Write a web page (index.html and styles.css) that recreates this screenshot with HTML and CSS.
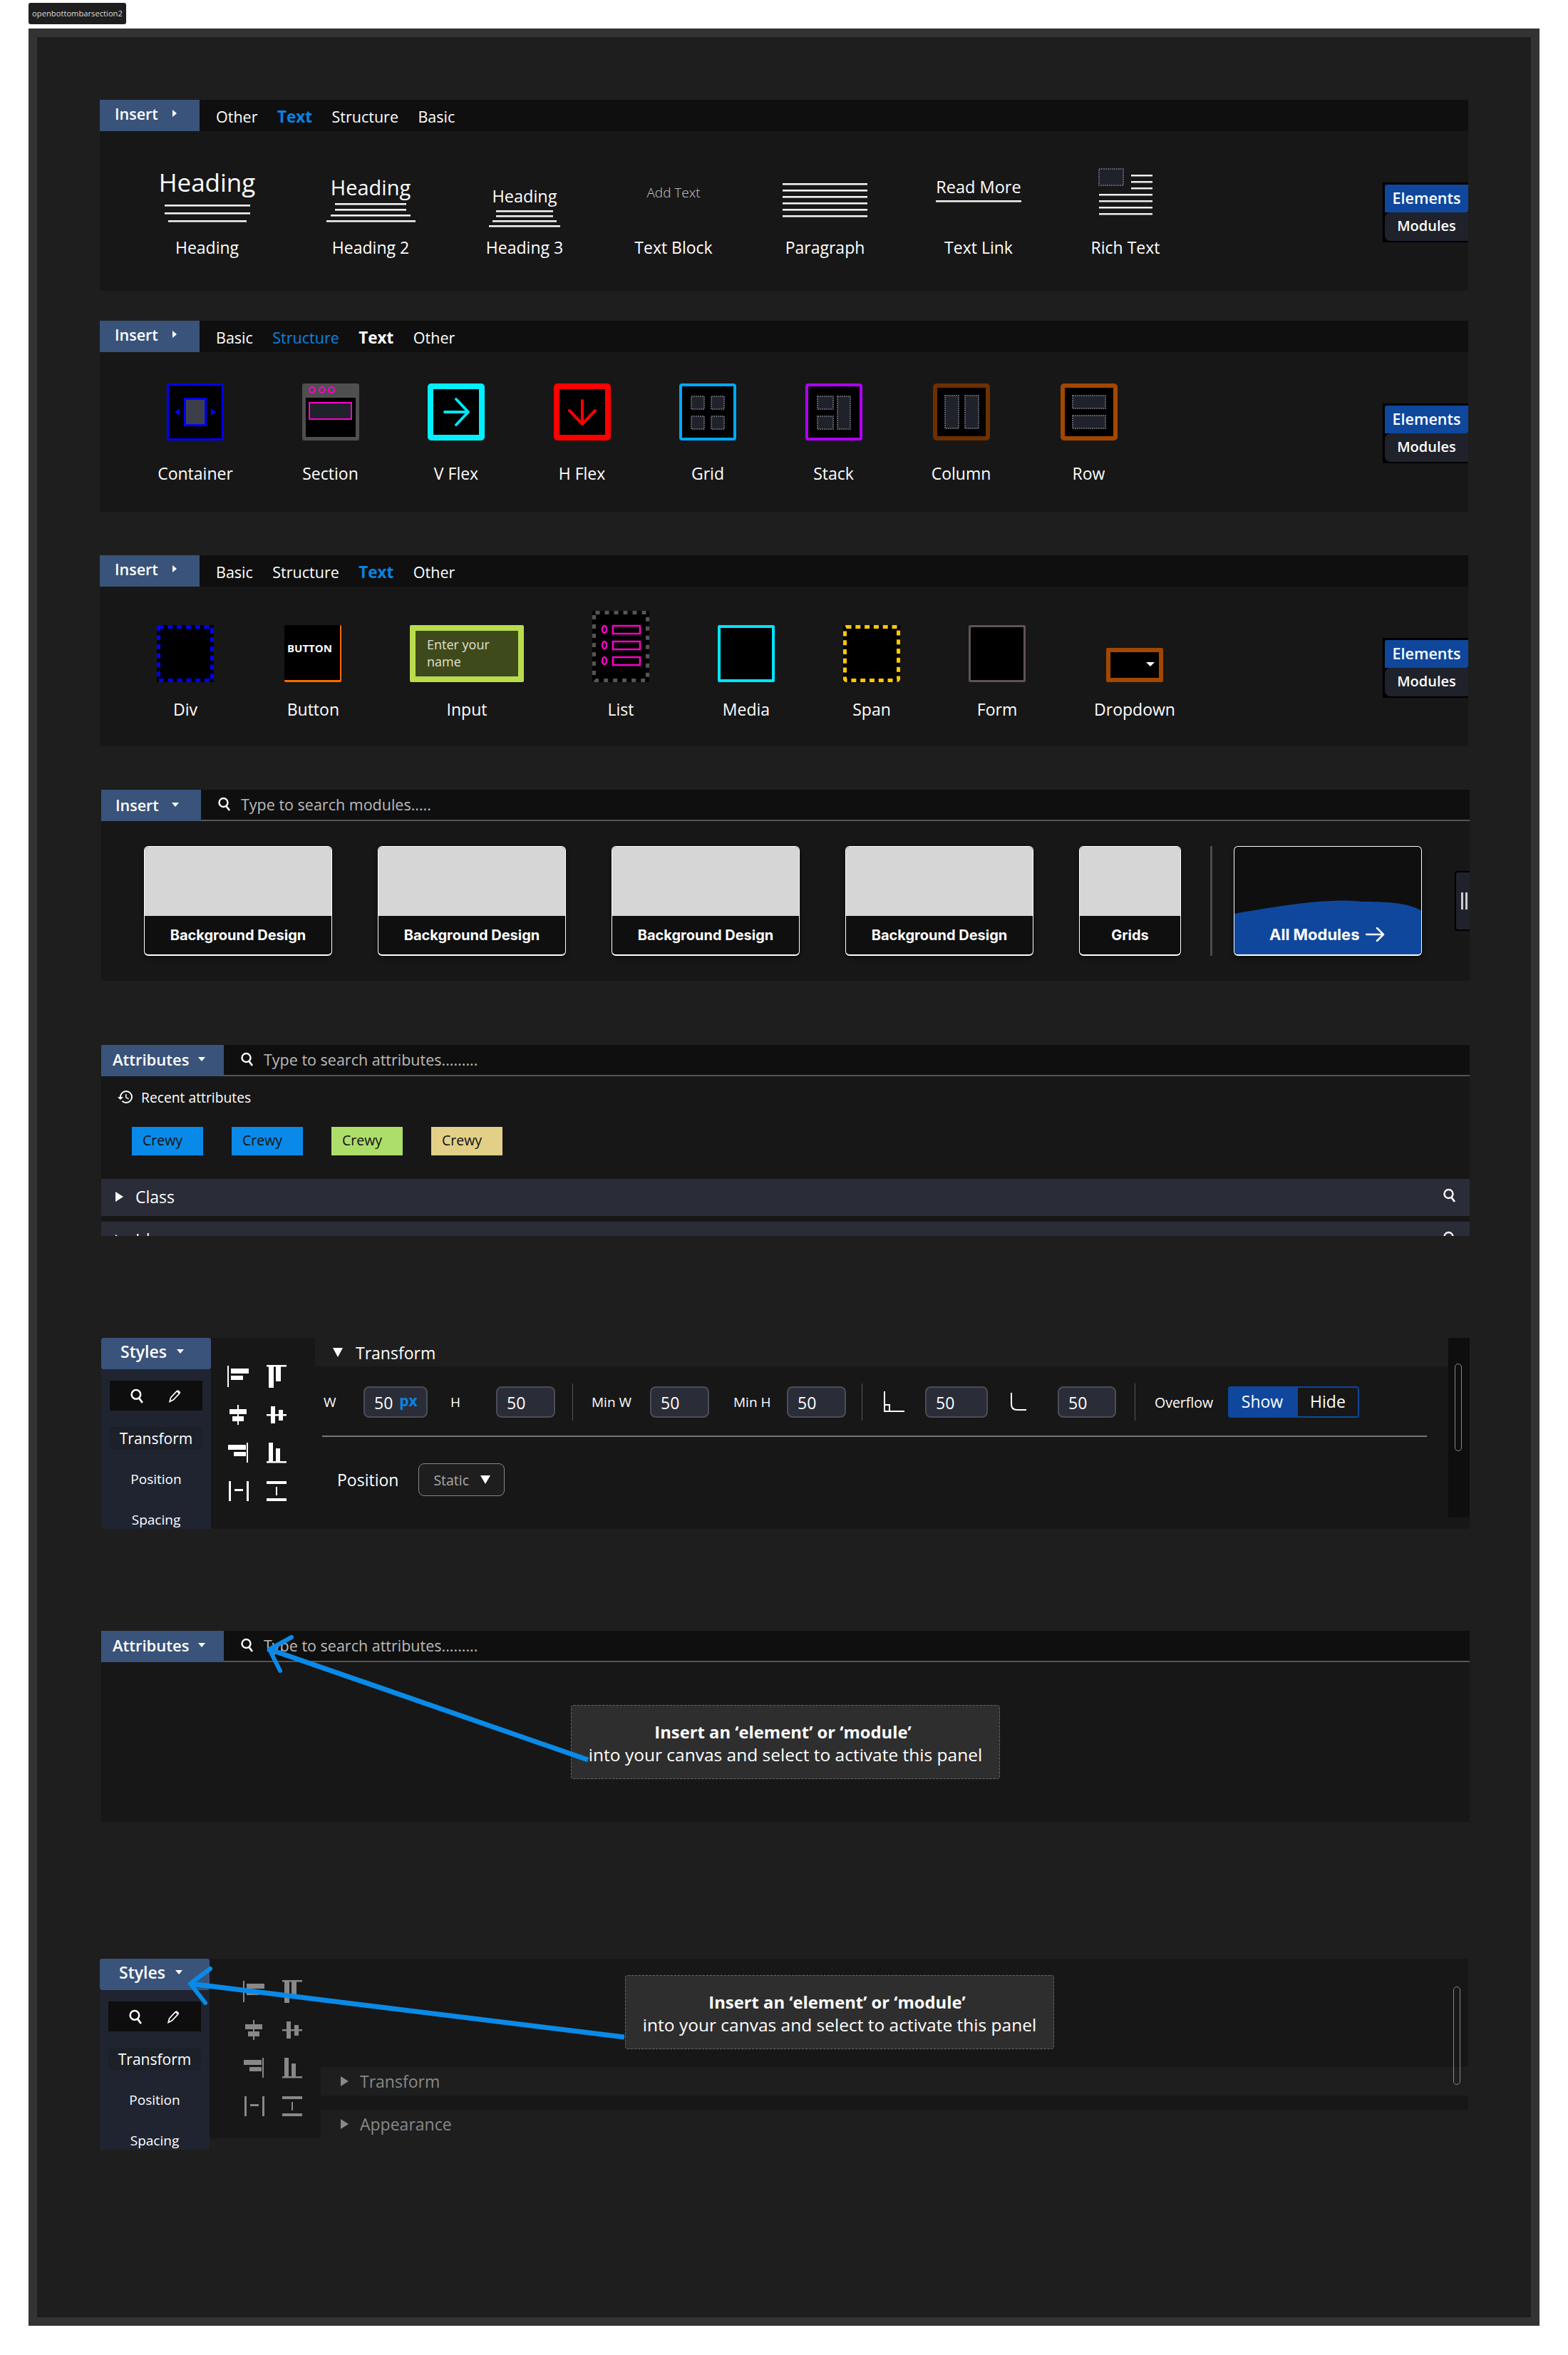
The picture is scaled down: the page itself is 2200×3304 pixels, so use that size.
FILE: index.html
```html
<!DOCTYPE html>
<html lang="en">
<head>
<meta charset="utf-8">
<title>openbottombarsection2</title>
<link rel="stylesheet" href="styles.css">
</head>
<body>
<svg class="sprite" width="0" height="0" aria-hidden="true">
  <symbol id="i-search" viewBox="0 0 20 20"><circle cx="8.5" cy="8" r="6" fill="none" stroke="currentColor" stroke-width="2.4"/><path d="M12.5 13 L17 19" stroke="currentColor" stroke-width="2.6"/></symbol>
  <symbol id="i-pencil" viewBox="0 0 18 18"><path d="M2 16.5 L3.5 11 L11.5 2.5 L15 5.5 L7 14 Z" fill="none" stroke="currentColor" stroke-width="1.6"/><path d="M11.5 2.5 L13 1 L16.5 4 L15 5.5 Z" fill="currentColor"/></symbol>
  <symbol id="a-left" viewBox="0 0 32 32"><path d="M1 1h2v30H1zM6 5h25v7H6zM6 15h17v6H6z" fill="currentColor"/></symbol>
  <symbol id="a-top" viewBox="0 0 32 32"><path d="M2 0h28v2.500H2zM5 2h7v30H5zM15 2h7v21h-7z" fill="currentColor"/></symbol>
  <symbol id="a-hcenter" viewBox="0 0 32 32"><path d="M15 2h2v28h-2zM4 8h24v7H4zM8 18h16v7H8z" fill="currentColor"/></symbol>
  <symbol id="a-vcenter" viewBox="0 0 32 32"><path d="M2 15h28v2.500H2zM8 4h6v24H8zM19 9h6v15h-6z" fill="currentColor"/></symbol>
  <symbol id="a-right" viewBox="0 0 32 32"><path d="M28 2h2v28h-2zM2 5h25v7H2zM10 15h17v6H10z" fill="currentColor"/></symbol>
  <symbol id="a-bottom" viewBox="0 0 32 32"><path d="M2 28h28v2.500H2zM5 2h6v26H5zM15 10h6v18h-6z" fill="currentColor"/></symbol>
  <symbol id="a-dish" viewBox="0 0 32 32"><path d="M3 2h3v28H3zM28 2h3v28h-3zM11 13h12v3H11z" fill="currentColor"/></symbol>
  <symbol id="a-disv" viewBox="0 0 32 32"><path d="M2 2h28v4H2zM2 26h28v4H2zM15 10h2v12h-2z" fill="currentColor"/></symbol>
</svg>

<div class="tag">openbottombarsection2</div>

<main class="frame">

  <section class="panel p1">
    <div class="bar">
      <div class="insert"><span>Insert</span><i class="tri-r"></i></div>
      <nav class="tabs"><span>Other</span><span class="on-b">Text</span><span>Structure</span><span>Basic</span></nav>
    </div>
    <div class="body">
      <div class="items items-1">
        <div class="item">
          <div class="ico h1-ico"><div class="h-txt h-a">Heading</div><div class="ln w120"></div><div class="ln w120"></div><div class="ln w110"></div></div>
          <div class="lab">Heading</div>
        </div>
        <div class="item">
          <div class="ico h2-ico"><div class="h-txt h-b">Heading</div><div class="ln w100"></div><div class="ln w100"></div><div class="ln w112"></div><div class="ln w125"></div></div>
          <div class="lab">Heading 2</div>
        </div>
        <div class="item">
          <div class="ico h3-ico"><div class="h-txt h-c">Heading</div><div class="ln w80"></div><div class="ln w80"></div><div class="ln w90"></div><div class="ln w100"></div></div>
          <div class="lab">Heading 3</div>
        </div>
        <div class="item">
          <div class="ico tb-ico"><div class="addtext">Add Text</div></div>
          <div class="lab">Text Block</div>
        </div>
        <div class="item">
          <div class="ico pg-ico"><div class="ln w119"></div><div class="ln w119"></div><div class="ln w119"></div><div class="ln w119"></div><div class="ln w119"></div><div class="ln w119"></div></div>
          <div class="lab">Paragraph</div>
        </div>
        <div class="item">
          <div class="ico tl-ico"><div class="readmore">Read More</div><div class="ln w120"></div></div>
          <div class="lab">Text Link</div>
        </div>
        <div class="item">
          <div class="ico rt-ico">
            <svg width="76" height="66" viewBox="0 0 76 66"><rect x="1" y="1" width="34" height="23" fill="#1f222b" stroke="#5a5d66" stroke-width="2" stroke-dasharray="2 1"/><g fill="#eee"><rect x="46" y="9" width="30" height="2.500"/><rect x="46" y="18" width="30" height="2.500"/><rect x="46" y="27" width="30" height="2.500"/><rect x="1" y="36" width="75" height="2.500"/><rect x="1" y="45" width="75" height="2.500"/><rect x="1" y="54" width="75" height="2.500"/><rect x="1" y="63" width="75" height="2.500"/></g></svg>
          </div>
          <div class="lab">Rich Text</div>
        </div>
      </div>
      <div class="side"><div class="side-a">Elements</div><div class="side-b">Modules</div></div>
    </div>
  </section>

  <section class="panel p2">
    <div class="bar">
      <div class="insert"><span>Insert</span><i class="tri-r"></i></div>
      <nav class="tabs"><span>Basic</span><span class="blue">Structure</span><span class="bold">Text</span><span>Other</span></nav>
    </div>
    <div class="body">
      <div class="items items-2">
        <div class="item"><div class="ico box">
          <svg width="80" height="80" viewBox="0 0 80 80"><rect x="1.500" y="1.500" width="77" height="77" rx="2" fill="#000" stroke="#0000ff" stroke-width="3"/><rect x="25.500" y="21.500" width="29" height="37" fill="#3c3f49" stroke="#0000ff" stroke-width="3"/><path d="M18 35v10l-7-5zM62 35v10l7-5z" fill="#0000ff"/></svg>
        </div><div class="lab">Container</div></div>
        <div class="item"><div class="ico box">
          <svg width="80" height="80" viewBox="0 0 80 80"><rect width="80" height="80" rx="3" fill="#4f4f4f"/><rect x="5" y="20" width="70" height="55" fill="#000"/><g fill="none" stroke="#ff00cc" stroke-width="2"><ellipse cx="14" cy="9" rx="4" ry="4"/><ellipse cx="28" cy="9" rx="4" ry="4"/><ellipse cx="41" cy="9" rx="4" ry="4"/><rect x="10" y="27" width="59" height="23" fill="#1f222b"/></g></svg>
        </div><div class="lab">Section</div></div>
        <div class="item"><div class="ico box">
          <svg width="80" height="80" viewBox="0 0 80 80"><rect x="4" y="4" width="72" height="72" rx="1" fill="#000" stroke="#00f0ff" stroke-width="8"/><path d="M24 40H57M40 22L57 40L40 58" fill="none" stroke="#00e5f5" stroke-width="4" stroke-linecap="round" stroke-linejoin="round"/></svg>
        </div><div class="lab">V Flex</div></div>
        <div class="item"><div class="ico box">
          <svg width="80" height="80" viewBox="0 0 80 80"><rect x="4" y="4" width="72" height="72" rx="1" fill="#000" stroke="#ff0000" stroke-width="8"/><path d="M40 24V57M22 38L40 57L58 38" fill="none" stroke="#ff0000" stroke-width="4" stroke-linecap="round" stroke-linejoin="round"/></svg>
        </div><div class="lab">H Flex</div></div>
        <div class="item"><div class="ico box">
          <svg width="80" height="80" viewBox="0 0 80 80"><rect x="2" y="2" width="76" height="76" rx="2" fill="#000" stroke="#00a8ff" stroke-width="4"/><g fill="#1f222b" stroke="#5a5d66" stroke-width="2" stroke-dasharray="2 1"><rect x="17" y="18" width="18" height="18"/><rect x="45" y="18" width="18" height="18"/><rect x="17" y="46" width="18" height="18"/><rect x="45" y="46" width="18" height="18"/></g></svg>
        </div><div class="lab">Grid</div></div>
        <div class="item"><div class="ico box">
          <svg width="80" height="80" viewBox="0 0 80 80"><rect x="2" y="2" width="76" height="76" rx="2" fill="#000" stroke="#b000ff" stroke-width="4"/><g fill="#1f222b" stroke="#5a5d66" stroke-width="2" stroke-dasharray="2 1"><rect x="17" y="18" width="22" height="18"/><rect x="17" y="46" width="22" height="18"/><rect x="45" y="18" width="18" height="46"/></g></svg>
        </div><div class="lab">Stack</div></div>
        <div class="item"><div class="ico box">
          <svg width="80" height="80" viewBox="0 0 80 80"><rect x="3" y="3" width="74" height="74" rx="2" fill="#000" stroke="#6d3000" stroke-width="6"/><g fill="#1f222b" stroke="#5a5d66" stroke-width="2" stroke-dasharray="2 1"><rect x="17" y="17" width="19" height="46"/><rect x="45" y="17" width="19" height="46"/></g></svg>
        </div><div class="lab">Column</div></div>
        <div class="item"><div class="ico box">
          <svg width="80" height="80" viewBox="0 0 80 80"><rect x="3" y="3" width="74" height="74" rx="2" fill="#000" stroke="#a34700" stroke-width="6"/><g fill="#1f222b" stroke="#5a5d66" stroke-width="2" stroke-dasharray="2 1"><rect x="17" y="17" width="46" height="18"/><rect x="17" y="45" width="46" height="18"/></g></svg>
        </div><div class="lab">Row</div></div>
      </div>
      <div class="side"><div class="side-a">Elements</div><div class="side-b">Modules</div></div>
    </div>
  </section>

  <section class="panel p3">
    <div class="bar">
      <div class="insert"><span>Insert</span><i class="tri-r"></i></div>
      <nav class="tabs"><span>Basic</span><span>Structure</span><span class="on-b">Text</span><span>Other</span></nav>
    </div>
    <div class="body">
      <div class="items items-3">
        <div class="item"><div class="ico box3">
          <svg width="80" height="80" viewBox="0 0 80 80"><rect width="80" height="80" fill="#000"/><rect x="2.500" y="2.500" width="75" height="75" fill="none" stroke="#0000ff" stroke-width="5" stroke-dasharray="7 5.800"/></svg>
        </div><div class="lab">Div</div></div>
        <div class="item item-btn"><div class="ico box3"><div class="btn-ico">BUTTON</div></div><div class="lab">Button</div></div>
        <div class="item"><div class="ico box3"><div class="input-ico">Enter your name</div></div><div class="lab">Input</div></div>
        <div class="item"><div class="ico box3">
          <svg class="list-ico" width="80" height="100" viewBox="0 0 80 100"><rect width="80" height="100" rx="3" fill="#000"/><rect x="2.500" y="2.500" width="75" height="95" rx="2" fill="none" stroke="#555" stroke-width="5" stroke-dasharray="6 7"/><g fill="none" stroke="#ff00cc" stroke-width="2.500"><ellipse cx="17" cy="26" rx="3" ry="5"/><ellipse cx="17" cy="48" rx="3" ry="5"/><ellipse cx="17" cy="70" rx="3" ry="5"/><rect x="29" y="21" width="38" height="11"/><rect x="29" y="43" width="38" height="11"/><rect x="29" y="65" width="38" height="11"/></g></svg>
        </div><div class="lab">List</div></div>
        <div class="item"><div class="ico box3"><div class="solid sol-media"></div></div><div class="lab">Media</div></div>
        <div class="item"><div class="ico box3">
          <svg width="80" height="80" viewBox="0 0 80 80"><rect width="80" height="80" rx="2" fill="#000"/><rect x="2.500" y="2.500" width="75" height="75" rx="2" fill="none" stroke="#ffc800" stroke-width="5" stroke-dasharray="7 5.800"/></svg>
        </div><div class="lab">Span</div></div>
        <div class="item"><div class="ico box3"><div class="solid sol-form"></div></div><div class="lab">Form</div></div>
        <div class="item"><div class="ico box3"><div class="dd-ico"><i class="tri-d-w"></i></div></div><div class="lab">Dropdown</div></div>
      </div>
      <div class="side"><div class="side-a">Elements</div><div class="side-b">Modules</div></div>
    </div>
  </section>

  <section class="panel p4 shift">
    <div class="bar bar-line">
      <div class="insert insert-open"><span>Insert</span><i class="tri-d"></i></div>
      <div class="search srch-a"><svg class="s-ico"><use href="#i-search"/></svg><span>Type to search modules.....</span></div>
    </div>
    <div class="mods">
      <div class="card"><div class="card-img"></div><div class="card-foot">Background Design</div></div>
      <div class="card"><div class="card-img"></div><div class="card-foot">Background Design</div></div>
      <div class="card"><div class="card-img"></div><div class="card-foot">Background Design</div></div>
      <div class="card"><div class="card-img"></div><div class="card-foot">Background Design</div></div>
      <div class="card card-sm"><div class="card-img"></div><div class="card-foot">Grids</div></div>
      <div class="vr"></div>
      <div class="card card-all">
        <svg class="wave" width="264" height="154" viewBox="0 0 264 154"><path d="M0 95C60 85 130 72 179 78C220 78 245 80 264 91V154H0Z" fill="#0f479c"/></svg>
        <div class="all-txt"><span>All Modules</span><svg width="27" height="20" viewBox="0 0 27 20"><path d="M1 10H25M16 1L25 10L16 19" fill="none" stroke="#fff" stroke-width="2.500" stroke-linecap="round" stroke-linejoin="round"/></svg></div>
      </div>
      <div class="handle"><i></i><i></i></div>
    </div>
  </section>

  <section class="panel p5 shift">
    <div class="bar bar-line">
      <div class="insert insert-attr"><span>Attributes</span><i class="tri-d"></i></div>
      <div class="search srch-b"><svg class="s-ico"><use href="#i-search"/></svg><span>Type to search attributes.........</span></div>
    </div>
    <div class="recent">
      <svg width="24" height="24" viewBox="0 0 24 24"><path fill="#fff" d="M13 3a9 9 0 0 0-9 9H1l3.890 3.890.07.14L9 12H6c0-3.870 3.130-7 7-7s7 3.130 7 7-3.130 7-7 7c-1.930 0-3.680-.79-4.940-2.060l-1.420 1.420A8.954 8.954 0 0 0 13 21a9 9 0 0 0 0-18zm-1 5v5l4.280 2.540.72-1.210-3.500-2.080V8H12z"/></svg>
      <span>Recent attributes</span>
    </div>
    <div class="chips">
      <div class="chip c-blue">Crewy</div><div class="chip c-blue">Crewy</div><div class="chip c-green">Crewy</div><div class="chip c-sand">Crewy</div>
    </div>
    <div class="acc"><i class="tri-r-lg"></i><span>Class</span><svg class="s-ico acc-s"><use href="#i-search"/></svg></div>
    <div class="acc acc-2"><i class="tri-r-lg"></i><span>Id</span><svg class="s-ico acc-s"><use href="#i-search"/></svg></div>
  </section>

  <section class="panel p6 shift">
    <div class="sidebar">
      <div class="styles-btn"><span>Styles</span><i class="tri-d"></i></div>
      <div class="tool"><svg class="t-s"><use href="#i-search"/></svg><svg class="t-p"><use href="#i-pencil"/></svg></div>
      <div class="nav"><div class="nav-on">Transform</div><div>Position</div><div>Spacing</div></div>
    </div>
    <div class="align">
      <svg><use href="#a-left"/></svg><svg><use href="#a-top"/></svg>
      <svg><use href="#a-hcenter"/></svg><svg><use href="#a-vcenter"/></svg>
      <svg><use href="#a-right"/></svg><svg><use href="#a-bottom"/></svg>
      <svg><use href="#a-dish"/></svg><svg><use href="#a-disv"/></svg>
    </div>
    <div class="tf">
      <div class="tf-head"><i class="tri-d-lg"></i><span>Transform</span></div>
      <div class="tf-body">
        <div class="fields">
          <span class="fl fl-w">W</span><div class="fd fd-px"><span>50</span><b>px</b></div>
          <span class="fl fl-h">H</span><div class="fd fd-83">50</div>
          <i class="dv dv-1"></i>
          <span class="fl fl-minw">Min W</span><div class="fd fd-83">50</div>
          <span class="fl fl-minh">Min H</span><div class="fd fd-83">50</div>
          <i class="dv dv-2"></i>
          <svg class="cn-1" width="58" height="30" viewBox="0 0 58 30"><path d="M1 0V28H29M1 19H8V28" fill="none" stroke="#fff" stroke-width="2"/></svg>
          <div class="fd fd-88">50</div>
          <svg class="cn-2" width="66" height="26" viewBox="0 0 66 26"><path d="M1 0V16Q1 24 9 24H22" fill="none" stroke="#fff" stroke-width="2"/></svg>
          <div class="fd fd-82">50</div>
          <i class="dv dv-3"></i>
          <span class="ovf">Overflow</span>
          <div class="show">Show</div><div class="hide">Hide</div>
        </div>
        <div class="hr"></div>
        <div class="pos"><span>Position</span><div class="sel"><span>Static</span><i class="tri-d-sel"></i></div></div>
      </div>
    </div>
    <div class="track"><div class="thumb"></div></div>
  </section>

  <section class="panel p7 shift">
    <div class="bar bar-line">
      <div class="insert insert-attr"><span>Attributes</span><i class="tri-d"></i></div>
      <div class="search srch-b"><svg class="s-ico"><use href="#i-search"/></svg><span>Type to search attributes.........</span></div>
    </div>
    <div class="callout call-7"><b>Insert an ‘element’ or ‘module’</b><span>into your canvas and select to activate this panel</span></div>
    <svg class="arrow" width="1920" height="268" viewBox="0 0 1920 268"><path d="M683 181L236 26" stroke="#0a8ae8" stroke-width="7" fill="none"/><path d="M267 9L236 26L251 56" stroke="#0a8ae8" stroke-width="6" fill="none" stroke-linecap="round" stroke-linejoin="round"/></svg>
  </section>

  <section class="panel p8">
    <div class="sidebar">
      <div class="styles-btn"><span>Styles</span><i class="tri-d"></i></div>
      <div class="tool"><svg class="t-s"><use href="#i-search"/></svg><svg class="t-p"><use href="#i-pencil"/></svg></div>
      <div class="nav"><div class="nav-on">Transform</div><div>Position</div><div>Spacing</div></div>
    </div>
    <div class="p8-main">
      <div class="align align-dim">
        <svg><use href="#a-left"/></svg><svg><use href="#a-top"/></svg>
        <svg><use href="#a-hcenter"/></svg><svg><use href="#a-vcenter"/></svg>
        <svg><use href="#a-right"/></svg><svg><use href="#a-bottom"/></svg>
        <svg><use href="#a-dish"/></svg><svg><use href="#a-disv"/></svg>
      </div>
      <div class="rows">
        <div class="row"><i class="tri-r-dim"></i><span>Transform</span></div>
        <div class="row"><i class="tri-r-dim"></i><span>Appearance</span></div>
      </div>
      <div class="thumb thumb-8"></div>
    </div>
    <div class="callout call-8"><b>Insert an ‘element’ or ‘module’</b><span>into your canvas and select to activate this panel</span></div>
    <svg class="arrow" width="1920" height="268" viewBox="0 0 1920 268"><path d="M736 110L127 35" stroke="#0a8ae8" stroke-width="7" fill="none"/><path d="M155 14L127 35L148 62" stroke="#0a8ae8" stroke-width="6" fill="none" stroke-linecap="round" stroke-linejoin="round"/></svg>
  </section>

</main>
</body>
</html>
```
FILE: styles.css
```css
* { box-sizing: border-box; }
html, body { margin: 0; padding: 0; background: #fff; }
body { font-family: "Open Sans", "Noto Sans", sans-serif; color: #fff; font-size: 20px; height: 3304px; overflow: hidden; }
i { display: block; font-style: normal; }
.sprite { position: absolute; }

.tag { width: 137px; height: 30px; margin: 4px 0 6px 40px; background: #1e1e1e; border-radius: 3px; font-size: 11.200px; line-height: 30px; text-align: center; white-space: nowrap; color: #ddd; }
.frame { width: 2120px; height: 3223px; margin-left: 40px; border: 12px solid #333; background: #1e1e1e; padding-left: 88px; overflow: hidden; }

.panel { position: relative; width: 1920px; height: 268px; background: #171717; }
.shift { margin-left: 2px; }
.p1 { margin-top: 88px; }
.p2 { margin-top: 42px; }
.p3 { margin-top: 61px; }
.p4 { margin-top: 61px; }
.p5 { margin-top: 90px; height: 268px; overflow: hidden; }
.p6 { margin-top: 143px; display: flex; }
.p7 { margin-top: 143px; }
.p8 { margin-top: 192px; display: flex; align-items: flex-start; background: transparent; }

/* top bar */
.bar { display: flex; height: 44px; background: #0f0f0f; }
.bar-line { border-bottom: 2px solid #555; }
.insert { width: 140px; height: 44px; padding: 0 0 6px 21px; display: flex; align-items: center; gap: 20px; background: #39537a; font-size: 21.500px; font-weight: 600; flex: none; }
.insert-open { gap: 18px; padding-left: 20px; padding-bottom: 2px; }
.insert-attr { width: 172px; padding-left: 16px; padding-bottom: 4px; gap: 13px; font-size: 22px; }
.tabs { display: flex; gap: 27.500px; padding: 3px 0 0 23px; align-items: center; font-size: 21.500px; }
.on-b { color: #0984e3; font-weight: 700; font-size: 22.500px; }
.blue { color: #0984e3; }
.bold { font-weight: 700; font-size: 22.500px; }

/* triangles */
.tri-r { width: 0; height: 0; border-left: 6px solid #fff; border-top: 5px solid transparent; border-bottom: 5px solid transparent; }
.tri-d { width: 0; height: 0; border-top: 6px solid #fff; border-left: 5.500px solid transparent; border-right: 5.500px solid transparent; }
.tri-r-lg { width: 0; height: 0; border-left: 11px solid #fff; border-top: 7px solid transparent; border-bottom: 7px solid transparent; }
.tri-d-lg { width: 0; height: 0; border-top: 13px solid #fff; border-left: 7px solid transparent; border-right: 7px solid transparent; }
.tri-d-w { width: 0; height: 0; border-top: 6px solid #fff; border-left: 6px solid transparent; border-right: 6px solid transparent; }
.tri-d-sel { width: 0; height: 0; border-top: 12px solid #fff; border-left: 7px solid transparent; border-right: 7px solid transparent; }
.tri-r-dim { width: 0; height: 0; border-left: 11px solid #888; border-top: 7px solid transparent; border-bottom: 7px solid transparent; }

/* element panels */
.body { display: flex; height: 224px; }
.items { display: grid; align-items: start; justify-items: center; }
.items-1 { grid-template-columns: 137px 126px 110px 112px 117px 118px 98px; column-gap: 98px; padding-left: 82px; }
.items-2 { grid-template-columns: 106px 80px 80px 80px 80px 80px 85px 80px; column-gap: 96.500px; padding-left: 81px; }
.items-3 { grid-template-columns: 80px 83px 160px 80px 80px 80px 80px 114px; column-gap: 96px; padding-left: 80px; }
.item { display: flex; flex-direction: column; align-items: center; width: 100%; }
.item-btn { align-items: flex-end; }
.item-btn .lab { margin-right: 3px; }
.lab { font-size: 23px; line-height: 30px; white-space: nowrap; }

.ico { display: flex; flex-direction: column; align-items: center; height: 149px; }
.p1 .lab { margin-top: -1px; }
.box { height: 155px; padding-top: 44px; }
.box3 { height: 157px; justify-content: flex-end; padding-bottom: 23px; }

.h-txt { white-space: nowrap; }
.h-a { font-size: 35px; line-height: 44px; }
.h-b { font-size: 29px; line-height: 36px; }
.h-c { font-size: 23.500px; line-height: 30px; }
.h1-ico { padding-top: 50px; gap: 8px; }
.h1-ico .h-txt { margin-bottom: 1px; }
.h2-ico { padding-top: 61px; gap: 5px; }
.h2-ico .h-txt { margin-bottom: -1px; }
.h3-ico { padding-top: 76px; gap: 4px; }
.h3-ico .h-txt { margin-bottom: 1px; }
.ln { height: 3px; background: #f2f2f2; border-bottom: 1px solid #999; flex: none; }
.w80 { width: 80px; } .w90 { width: 90px; } .w100 { width: 100px; } .w110 { width: 110px; } .w112 { width: 112px; }
.w119 { width: 119px; } .w120 { width: 120px; } .w125 { width: 125px; }
.tb-ico { padding-top: 72px; }
.addtext { font-size: 19px; line-height: 28px; color: #c8c8c8; font-weight: 300; white-space: nowrap; }
.pg-ico { padding-top: 73px; gap: 6px; }
.tl-ico { padding-top: 63px; gap: 3px; }
.readmore { font-size: 23.500px; line-height: 31px; white-space: nowrap; }
.rt-ico { padding-top: 52px; }

.side { width: 120px; height: 84px; padding: 3px 0 2px 3px; background: #000; position: absolute; right: 0; top: 116px; }
.side-a { height: 39px; background: #0f479c; border-radius: 3px 0 3px 0; font-size: 21.500px; font-weight: 600; line-height: 38px; text-align: center; }
.side-b { height: 40px; background: #1f222b; border-radius: 8px 0 0 8px; font-size: 20px; font-weight: 600; line-height: 38px; text-align: center; }

.solid { width: 80px; height: 80px; background: #000; border-radius: 2px; }
.sol-media { border: 4px solid #00e5ff; }
.sol-form { border: 3px solid #5e5353; }
.btn-ico { width: 80px; height: 80px; background: #000; border-right: 2px solid #ff6a00; border-bottom: 3px solid #ff6a00; border-radius: 2px; font-size: 15px; font-weight: 700; line-height: 20px; padding: 22px 0 0 4px; white-space: nowrap; }
.input-ico { width: 160px; height: 80px; background: #3f4a1c; border: 8px solid #b8dc4c; border-radius: 2px; padding: 7px 16px; font-size: 18px; line-height: 24px; color: #e0e0d0; }
.dd-ico { width: 80px; height: 48px; background: #000; border: 6px solid #a34700; border-radius: 2px; position: relative; padding: 14px 0 0 50px; }

/* search */
.search { display: flex; align-items: center; color: #bbb; font-size: 21.500px; flex: 1; padding-bottom: 2px; }
.s-ico { width: 20px; height: 20px; color: #fff; flex: none; }
.srch-a { padding-left: 23px; gap: 13px; }
.srch-b { padding-left: 23px; gap: 13px; }

/* modules */
.mods { display: flex; padding: 35px 0 0 60px; position: relative; }
.card { width: 264px; height: 154px; border: 1px solid #fff; border-width: 1px 1px 2px 1px; border-radius: 6px; overflow: hidden; background: #0f0f0f; flex: none; margin-right: 64px; position: relative; box-shadow: 0 3px 6px rgba(0,0,0,.4); }
.card-img { height: 97px; background: #d6d6d6; }
.card-foot { font-family: "Inter", sans-serif; font-weight: 700; font-size: 20px; line-height: 55px; text-align: center; }
.card-sm { width: 143px; margin-right: 41px; }
.vr { width: 3px; height: 154px; background: #4a4a4a; margin-right: 30px; flex: none; }
.card-all { margin-right: 0; }
.wave { position: absolute; left: -1px; top: -1px; }
.all-txt { position: absolute; left: 49px; top: 108px; display: flex; align-items: center; gap: 8px; font-family: "Inter", sans-serif; font-weight: 700; font-size: 22px; line-height: 30px; white-space: nowrap; }
.handle { position: absolute; right: 0; top: 70px; width: 21px; height: 84px; background: #1f222b; border: 2px solid #000; border-right: 0; border-radius: 4px 0 0 4px; display: flex; gap: 3px; padding: 28px 0 0 7px; }
.handle i { width: 3px; height: 24px; background: #ccc; }

/* attributes */
.recent { display: flex; align-items: center; gap: 10px; padding: 12px 0 0 22px; height: 46px; font-size: 19.300px; }
.chips { display: flex; gap: 40px; padding: 25px 0 0 43px; }
.chip { width: 100px; height: 40px; padding-left: 15px; color: #111; font-size: 19.500px; line-height: 38px; }
.c-blue { background: #0a8ae8; }
.c-green { background: #aede6a; }
.c-sand { background: #e3d088; }
.acc { height: 52px; margin-top: 33px; background: #2a2d37; display: flex; align-items: center; padding: 0 0 3px 20px; gap: 17px; font-size: 23px; position: relative; }
.acc-2 { margin-top: 8px; }
.acc-s { position: absolute; right: 18px; top: 13px; }

/* styles sidebar */
.sidebar { width: 154px; height: 268px; background: #1f2430; flex: none; overflow: hidden; }
.styles-btn { height: 44px; background: #39537a; border-radius: 4px; display: flex; align-items: center; gap: 14px; font-size: 23px; font-weight: 600; padding: 0 0 6px 27px; }
.tool { margin: 16px 12px 0; height: 42px; background: #0e0e0e; display: flex; align-items: center; gap: 33px; padding-left: 28px; color: #fff; }
.t-s { width: 21px; height: 21px; color: #fff; }
.t-p { width: 19px; height: 19px; color: #fff; }
.nav { display: flex; flex-direction: column; gap: 25px; margin-top: 23px; text-align: center; font-size: 19px; line-height: 32px; }
.nav-on { margin: 0 12px; background: #1c2029; border-radius: 6px; font-size: 21px; }

/* align icons */
.align { display: grid; grid-template-columns: 32px 32px; grid-auto-rows: 32px; column-gap: 22px; row-gap: 21.500px; align-content: start; padding: 38px 0 0 22px; background: #171717; width: 146px; flex: none; color: #fff; }
.align svg { width: 32px; height: 32px; display: block; }
.align-dim { width: 156px; padding: 30px 0 0 46px; background: transparent; color: #888; }

/* transform */
.tf { flex: 1; display: flex; flex-direction: column; background: #1e1e1e; }
.tf-head { height: 40px; display: flex; align-items: center; gap: 18px; padding: 1px 0 0 25px; font-size: 23px; }
.tf-body { flex: 1; background: #171717; padding: 28px 0 0 12px; }
.fields { display: flex; align-items: center; height: 44px; }
.fl { flex: none; font-size: 19px; }
.fl-w { width: 56px; }
.fl-h { width: 64px; margin-left: 32px; }
.fl-minw { width: 82px; }
.fl-minh { width: 75px; margin-left: 34px; }
.fd { height: 44px; flex: none; background: #2a2d37; border: 2px solid #4a4d57; border-radius: 8px; font-size: 23px; line-height: 42px; padding-left: 13px; }
.fd-px { width: 90px; display: flex; gap: 9px; }
.fd-px b { color: #0984e3; font-weight: 700; font-size: 21px; line-height: 36px; }
.fd-83 { width: 83px; }
.fd-88 { width: 88px; }
.fd-82 { width: 82px; }
.dv { width: 1px; height: 52px; background: #555; flex: none; }
.dv-1 { margin: 0 26px 0 24px; }
.dv-2 { margin: 0 30px 0 22px; }
.dv-3 { margin: 0 27px 0 26px; }
.cn-1, .cn-2 { flex: none; }
.cn-2 { margin-left: 32px; }
.ovf { width: 103px; font-size: 19.500px; flex: none; }
.show { width: 96px; height: 44px; background: #0f479c; border-radius: 4px 0 0 4px; font-size: 23px; line-height: 42px; text-align: center; flex: none; }
.hide { width: 88px; height: 44px; border: 2px solid #0f479c; border-radius: 0 4px 4px 0; font-size: 23px; line-height: 39px; text-align: center; flex: none; }
.hr { height: 2px; margin: 25px 60px 0 -2px; background: #777; width: 1550px; }
.pos { display: flex; align-items: center; gap: 28px; padding: 37px 0 0 19px; font-size: 23px; }
.sel { width: 121px; height: 46px; border: 1px solid #888; border-radius: 8px; background: #1e1e1e; display: flex; align-items: center; justify-content: space-between; padding: 0 19px 0 20px; font-size: 19.500px; color: #aaa; }
.track { position: absolute; right: 0; top: 0; width: 30px; height: 252px; background: #0e0e0e; }
.thumb { position: absolute; left: 9px; top: 36px; width: 10px; height: 123px; border: 1px solid #888; border-radius: 5px; }

/* callout */
.callout { position: absolute; width: 602px; height: 104px; background: #2e2e2e; border: 1px dashed #666; border-radius: 4px; display: flex; flex-direction: column; align-items: center; padding-top: 21px; font-size: 24.500px; line-height: 32px; white-space: nowrap; }
.callout b { font-weight: 700; font-size: 23.800px; margin-right: 7px; }
.call-7 { left: 659px; top: 104px; }
.call-8 { left: 737px; top: 23px; }
.arrow { position: absolute; left: 0; top: 0; pointer-events: none; }

/* empty styles panel */
.p8-main { position: relative; width: 1766px; height: 252px; background: #171717; display: flex; }
.rows { flex: 1; display: flex; flex-direction: column; gap: 20px; padding-top: 152px; }
.row { height: 40px; background: #1e1e1e; display: flex; align-items: center; gap: 16px; padding-left: 28px; color: #888; font-size: 23px; }
.thumb-8 { left: auto; right: 11px; top: 39px; height: 138px; }
```
